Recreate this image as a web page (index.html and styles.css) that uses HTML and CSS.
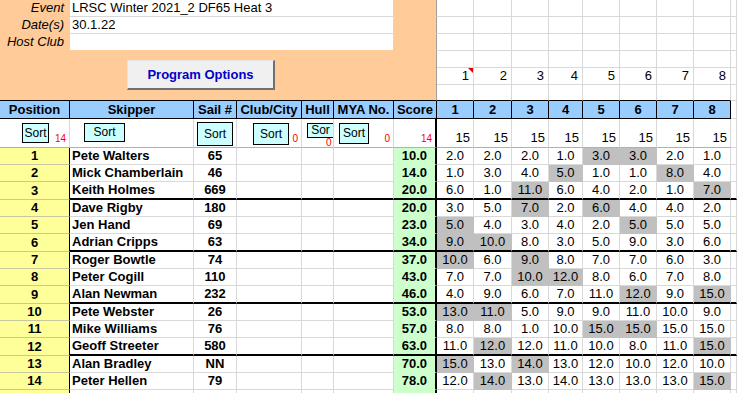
FILE: index.html
```html
<!DOCTYPE html>
<html lang="en">
<head>
<meta charset="utf-8">
<title>Results</title>
<link rel="stylesheet" href="styles.css">
</head>
<body>
<div class="sheet">
  <div class="row">
    <div class="c lbl">Event</div>
    <div class="c inp">LRSC Winter 2021_2 DF65 Heat 3</div>
    <div class="c orn"></div>
    <div class="c"></div><div class="c"></div><div class="c"></div><div class="c"></div><div class="c"></div><div class="c"></div><div class="c"></div><div class="c"></div><div class="c x"></div>
  </div>
  <div class="row">
    <div class="c lbl">Date(s)</div>
    <div class="c inp">30.1.22</div>
    <div class="c orn"></div>
    <div class="c"></div><div class="c"></div><div class="c"></div><div class="c"></div><div class="c"></div><div class="c"></div><div class="c"></div><div class="c"></div><div class="c x"></div>
  </div>
  <div class="row">
    <div class="c lbl">Host Club</div>
    <div class="c inp last"></div>
    <div class="c orn"></div>
    <div class="c"></div><div class="c"></div><div class="c"></div><div class="c"></div><div class="c"></div><div class="c"></div><div class="c"></div><div class="c"></div><div class="c x"></div>
  </div>
  <div class="c panel"><button class="prog" type="button">Program Options</button></div>
  <div class="row">
    <div class="c"></div><div class="c"></div><div class="c"></div><div class="c"></div><div class="c"></div><div class="c"></div><div class="c"></div><div class="c"></div><div class="c x"></div>
  </div>
  <div class="row">
    <div class="c num note">1</div><div class="c num">2</div><div class="c num">3</div><div class="c num">4</div><div class="c num">5</div><div class="c num">6</div><div class="c num">7</div><div class="c num">8</div><div class="c x"></div>
  </div>
  <div class="row">
    <div class="c top"></div><div class="c top"></div><div class="c top"></div><div class="c top"></div><div class="c top"></div><div class="c top"></div><div class="c top"></div><div class="c top"></div><div class="c x"></div>
  </div>

  <div class="row head">
    <div class="c h">Position</div>
    <div class="c h">Skipper</div>
    <div class="c h">Sail #</div>
    <div class="c h">Club/City</div>
    <div class="c h">Hull</div>
    <div class="c h">MYA No.</div>
    <div class="c h hs">Score</div>
    <div class="c h">1</div><div class="c h">2</div><div class="c h">3</div><div class="c h">4</div><div class="c h">5</div><div class="c h">6</div><div class="c h">7</div><div class="c h">8</div>
    <div class="c x"></div>
  </div>

  <div class="row sortrow">
    <div class="c st"><span class="sb sb-pos">Sort</span><span class="cnt">14</span></div>
    <div class="c st"><span class="sb sb-skip">Sort</span></div>
    <div class="c st"><span class="sb sb-sail">Sort</span></div>
    <div class="c st"><span class="sb sb-club">Sort</span><span class="cnt">0</span></div>
    <div class="c st"><span class="sb sb-hull">Sor</span><span class="cnt under">0</span></div>
    <div class="c st"><span class="sb sb-mya">Sort</span><span class="cnt">0</span></div>
    <div class="c st sscore"><span class="cnt">14</span></div>
    <div class="c st fif">15</div><div class="c st fif">15</div><div class="c st fif">15</div><div class="c st fif">15</div><div class="c st fif">15</div><div class="c st fif">15</div><div class="c st fif">15</div><div class="c st fif">15</div>
    <div class="c x"></div>
  </div>

  <div class="row">
    <div class="c p">1</div><div class="c n">Pete Walters</div><div class="c s">65</div><div class="c"></div><div class="c"></div><div class="c"></div><div class="c sc">10.0</div>
    <div class="c r">2.0</div><div class="c r">2.0</div><div class="c r">2.0</div><div class="c r">1.0</div><div class="c r g">3.0</div><div class="c r g">3.0</div><div class="c r">2.0</div><div class="c r">1.0</div><div class="c x"></div>
  </div>
  <div class="row">
    <div class="c p">2</div><div class="c n">Mick Chamberlain</div><div class="c s">46</div><div class="c"></div><div class="c"></div><div class="c"></div><div class="c sc">14.0</div>
    <div class="c r">1.0</div><div class="c r">3.0</div><div class="c r">4.0</div><div class="c r g">5.0</div><div class="c r">1.0</div><div class="c r">1.0</div><div class="c r g">8.0</div><div class="c r">4.0</div><div class="c x"></div>
  </div>
  <div class="row end">
    <div class="c p">3</div><div class="c n">Keith Holmes</div><div class="c s">669</div><div class="c"></div><div class="c"></div><div class="c"></div><div class="c sc">20.0</div>
    <div class="c r">6.0</div><div class="c r">1.0</div><div class="c r g">11.0</div><div class="c r">6.0</div><div class="c r">4.0</div><div class="c r">2.0</div><div class="c r">1.0</div><div class="c r g">7.0</div><div class="c x"></div>
  </div>
  <div class="row">
    <div class="c p">4</div><div class="c n">Dave Rigby</div><div class="c s">180</div><div class="c"></div><div class="c"></div><div class="c"></div><div class="c sc">20.0</div>
    <div class="c r">3.0</div><div class="c r">5.0</div><div class="c r g">7.0</div><div class="c r">2.0</div><div class="c r g">6.0</div><div class="c r">4.0</div><div class="c r">4.0</div><div class="c r">2.0</div><div class="c x"></div>
  </div>
  <div class="row">
    <div class="c p">5</div><div class="c n">Jen Hand</div><div class="c s">69</div><div class="c"></div><div class="c"></div><div class="c"></div><div class="c sc">23.0</div>
    <div class="c r g">5.0</div><div class="c r">4.0</div><div class="c r">3.0</div><div class="c r">4.0</div><div class="c r">2.0</div><div class="c r g">5.0</div><div class="c r">5.0</div><div class="c r">5.0</div><div class="c x"></div>
  </div>
  <div class="row end">
    <div class="c p">6</div><div class="c n">Adrian Cripps</div><div class="c s">63</div><div class="c"></div><div class="c"></div><div class="c"></div><div class="c sc">34.0</div>
    <div class="c r g">9.0</div><div class="c r g">10.0</div><div class="c r">8.0</div><div class="c r">3.0</div><div class="c r">5.0</div><div class="c r">9.0</div><div class="c r">3.0</div><div class="c r">6.0</div><div class="c x"></div>
  </div>
  <div class="row">
    <div class="c p">7</div><div class="c n">Roger Bowtle</div><div class="c s">74</div><div class="c"></div><div class="c"></div><div class="c"></div><div class="c sc">37.0</div>
    <div class="c r g">10.0</div><div class="c r">6.0</div><div class="c r g">9.0</div><div class="c r">8.0</div><div class="c r">7.0</div><div class="c r">7.0</div><div class="c r">6.0</div><div class="c r">3.0</div><div class="c x"></div>
  </div>
  <div class="row">
    <div class="c p">8</div><div class="c n">Peter Cogill</div><div class="c s">110</div><div class="c"></div><div class="c"></div><div class="c"></div><div class="c sc">43.0</div>
    <div class="c r">7.0</div><div class="c r">7.0</div><div class="c r g">10.0</div><div class="c r g">12.0</div><div class="c r">8.0</div><div class="c r">6.0</div><div class="c r">7.0</div><div class="c r">8.0</div><div class="c x"></div>
  </div>
  <div class="row end">
    <div class="c p">9</div><div class="c n">Alan Newman</div><div class="c s">232</div><div class="c"></div><div class="c"></div><div class="c"></div><div class="c sc">46.0</div>
    <div class="c r">4.0</div><div class="c r">9.0</div><div class="c r">6.0</div><div class="c r">7.0</div><div class="c r">11.0</div><div class="c r g">12.0</div><div class="c r">9.0</div><div class="c r g">15.0</div><div class="c x"></div>
  </div>
  <div class="row">
    <div class="c p">10</div><div class="c n">Pete Webster</div><div class="c s">26</div><div class="c"></div><div class="c"></div><div class="c"></div><div class="c sc">53.0</div>
    <div class="c r g">13.0</div><div class="c r g">11.0</div><div class="c r">5.0</div><div class="c r">9.0</div><div class="c r">9.0</div><div class="c r">11.0</div><div class="c r">10.0</div><div class="c r">9.0</div><div class="c x"></div>
  </div>
  <div class="row">
    <div class="c p">11</div><div class="c n">Mike Williams</div><div class="c s">76</div><div class="c"></div><div class="c"></div><div class="c"></div><div class="c sc">57.0</div>
    <div class="c r">8.0</div><div class="c r">8.0</div><div class="c r">1.0</div><div class="c r">10.0</div><div class="c r g">15.0</div><div class="c r g">15.0</div><div class="c r">15.0</div><div class="c r">15.0</div><div class="c x"></div>
  </div>
  <div class="row end">
    <div class="c p">12</div><div class="c n">Geoff Streeter</div><div class="c s">580</div><div class="c"></div><div class="c"></div><div class="c"></div><div class="c sc">63.0</div>
    <div class="c r">11.0</div><div class="c r g">12.0</div><div class="c r">12.0</div><div class="c r">11.0</div><div class="c r">10.0</div><div class="c r">8.0</div><div class="c r">11.0</div><div class="c r g">15.0</div><div class="c x"></div>
  </div>
  <div class="row">
    <div class="c p">13</div><div class="c n">Alan Bradley</div><div class="c s">NN</div><div class="c"></div><div class="c"></div><div class="c"></div><div class="c sc">70.0</div>
    <div class="c r g">15.0</div><div class="c r">13.0</div><div class="c r g">14.0</div><div class="c r">13.0</div><div class="c r">12.0</div><div class="c r">10.0</div><div class="c r">12.0</div><div class="c r">10.0</div><div class="c x"></div>
  </div>
  <div class="row">
    <div class="c p">14</div><div class="c n">Peter Hellen</div><div class="c s">79</div><div class="c"></div><div class="c"></div><div class="c"></div><div class="c sc">78.0</div>
    <div class="c r">12.0</div><div class="c r g">14.0</div><div class="c r">13.0</div><div class="c r">14.0</div><div class="c r">13.0</div><div class="c r">13.0</div><div class="c r">13.0</div><div class="c r g">15.0</div><div class="c x"></div>
  </div>
  <div class="row">
    <div class="c p"></div><div class="c n"></div><div class="c s"></div><div class="c"></div><div class="c"></div><div class="c"></div><div class="c sc"></div>
    <div class="c r"></div><div class="c r"></div><div class="c r"></div><div class="c r"></div><div class="c r"></div><div class="c r"></div><div class="c r"></div><div class="c r"></div><div class="c x"></div>
  </div>
</div>
</body>
</html>
```

FILE: styles.css
```css
* { box-sizing: border-box; }
html, body { margin: 0; padding: 0; background: #fff; }
body {
  font-family: "Liberation Sans", Arial, sans-serif;
  font-size: 13px;
  color: #000;
}
.sheet {
  display: grid;
  grid-template-columns: 70px 124px 43px 65px 32px 60px 43px 37px 38px 37px 34px 37px 37px 37px 37px 1fr;
  grid-template-rows: repeat(5, 17px) 16px 18px 29px 17px 17px 18px 17px 17px 18px 17px 17px 18px 17px 17px 18px 17px 17px 17px;
  width: 737px;
  height: 393px;
  overflow: hidden;
}
.row { display: contents; }
.c {
  border-right: 1px solid #d9d9d9;
  border-bottom: 1px solid #d9d9d9;
  line-height: 16px;
  white-space: nowrap;
  overflow: hidden;
  padding: 0 2px;
  min-width: 0;
}

/* top panel */
.lbl {
  background: #ffcc99;
  border-color: #ffcc99;
  font-style: italic;
  text-align: right;
  padding-right: 5px;
}
.inp {
  grid-column: span 5;
  background: #fff;
  border-right-color: #ffcc99;
  padding-left: 2px;
}
.inp.last { border-bottom-color: #ffcc99; }
.orn {
  background: #ffcc99;
  border-bottom-color: #ffcc99;
  border-right-color: #a0a0a0;
}
.panel {
  grid-column: span 7;
  grid-row: span 3;
  background: #ffcc99;
  border-right-color: #a0a0a0;
  border-bottom: 1px solid #000;
  padding: 9px 0 0 127px;
}
.prog {
  display: block;
  width: 148px;
  height: 30px;
  margin: 0;
  padding: 0;
  background: #f0f0f0;
  border-style: solid;
  border-width: 1px 2px 2px 1px;
  border-color: #e3e3e3 #707070 #707070 #e3e3e3;
  font-family: "Liberation Sans", Arial, sans-serif;
  font-size: 13px;
  font-weight: bold;
  color: #0000cc;
  text-align: center;
}
.num { text-align: right; padding-right: 4px; }
.note { position: relative; }
.note::after {
  content: "";
  position: absolute;
  top: 0;
  right: 0;
  border-style: solid;
  border-width: 0 5px 5px 0;
  border-color: transparent #e00000 transparent transparent;
}
.top { border-bottom-color: #000; }

/* header */
.h {
  background: #99ccff;
  border-right: 1px solid #000;
  border-bottom: 1px solid #000;
  font-weight: bold;
  text-align: center;
  line-height: 17px;
  padding: 0;
}
.head .x { border-bottom-color: #d9d9d9; }

/* sort row */
.st {
  display: flex;
  align-items: flex-start;
  border-bottom-color: #b0b0b0;
  padding: 0;
}
.sb {
  display: block;
  position: relative;
  z-index: 1;
  flex: none;
  background: #ccffff;
  border: 1px solid #000;
  font-size: 12px;
  text-align: center;
  margin-top: 4px;
  overflow: hidden;
}
.sb-pos { width: 27px; height: 20px; margin-left: 22px; line-height: 18px; }
.sb-skip { width: 41px; height: 19px; margin-left: 14px; line-height: 17px; }
.sb-sail { width: 36px; height: 24px; margin-left: 3px; margin-top: 3px; line-height: 22px; }
.sb-club { width: 36px; height: 22px; margin-left: 16px; line-height: 20px; }
.sb-hull { width: 27px; height: 15px; margin-left: 5px; line-height: 12px; }
.sb-mya { width: 30px; height: 21px; margin-left: 5px; line-height: 18px; }
.cnt {
  margin-left: auto;
  align-self: flex-end;
  color: #ff0000;
  font-size: 10px;
  line-height: 12px;
  padding: 0 3px 2px 0;
}
.cnt.under { margin-left: -8px; line-height: 9px; padding-bottom: 0; }
.sscore { border-right: 2px solid #000; }
.fif {
  align-items: flex-end;
  justify-content: flex-end;
  padding: 0 3px 1px 0;
}

/* data */
.p {
  background: #ffff99;
  border-right-color: #000;
  border-bottom-color: #c8c8a0;
  font-weight: bold;
  text-align: center;
}
.n { font-weight: bold; padding-left: 2px; }
.s { font-weight: bold; text-align: center; }
.sc {
  background: #ccffcc;
  border-bottom-color: #ccffcc;
  border-right: 2px solid #000;
  font-weight: bold;
  text-align: right;
  padding-right: 8px;
}
.r { text-align: center; padding: 0; }
.g { background: #c0c0c0; border-color: #c0c0c0; }
.end .c { border-bottom: 2px solid #000; }
.end .p { border-bottom: 1px solid #c8c8a0; padding-top: 1px; }
```
